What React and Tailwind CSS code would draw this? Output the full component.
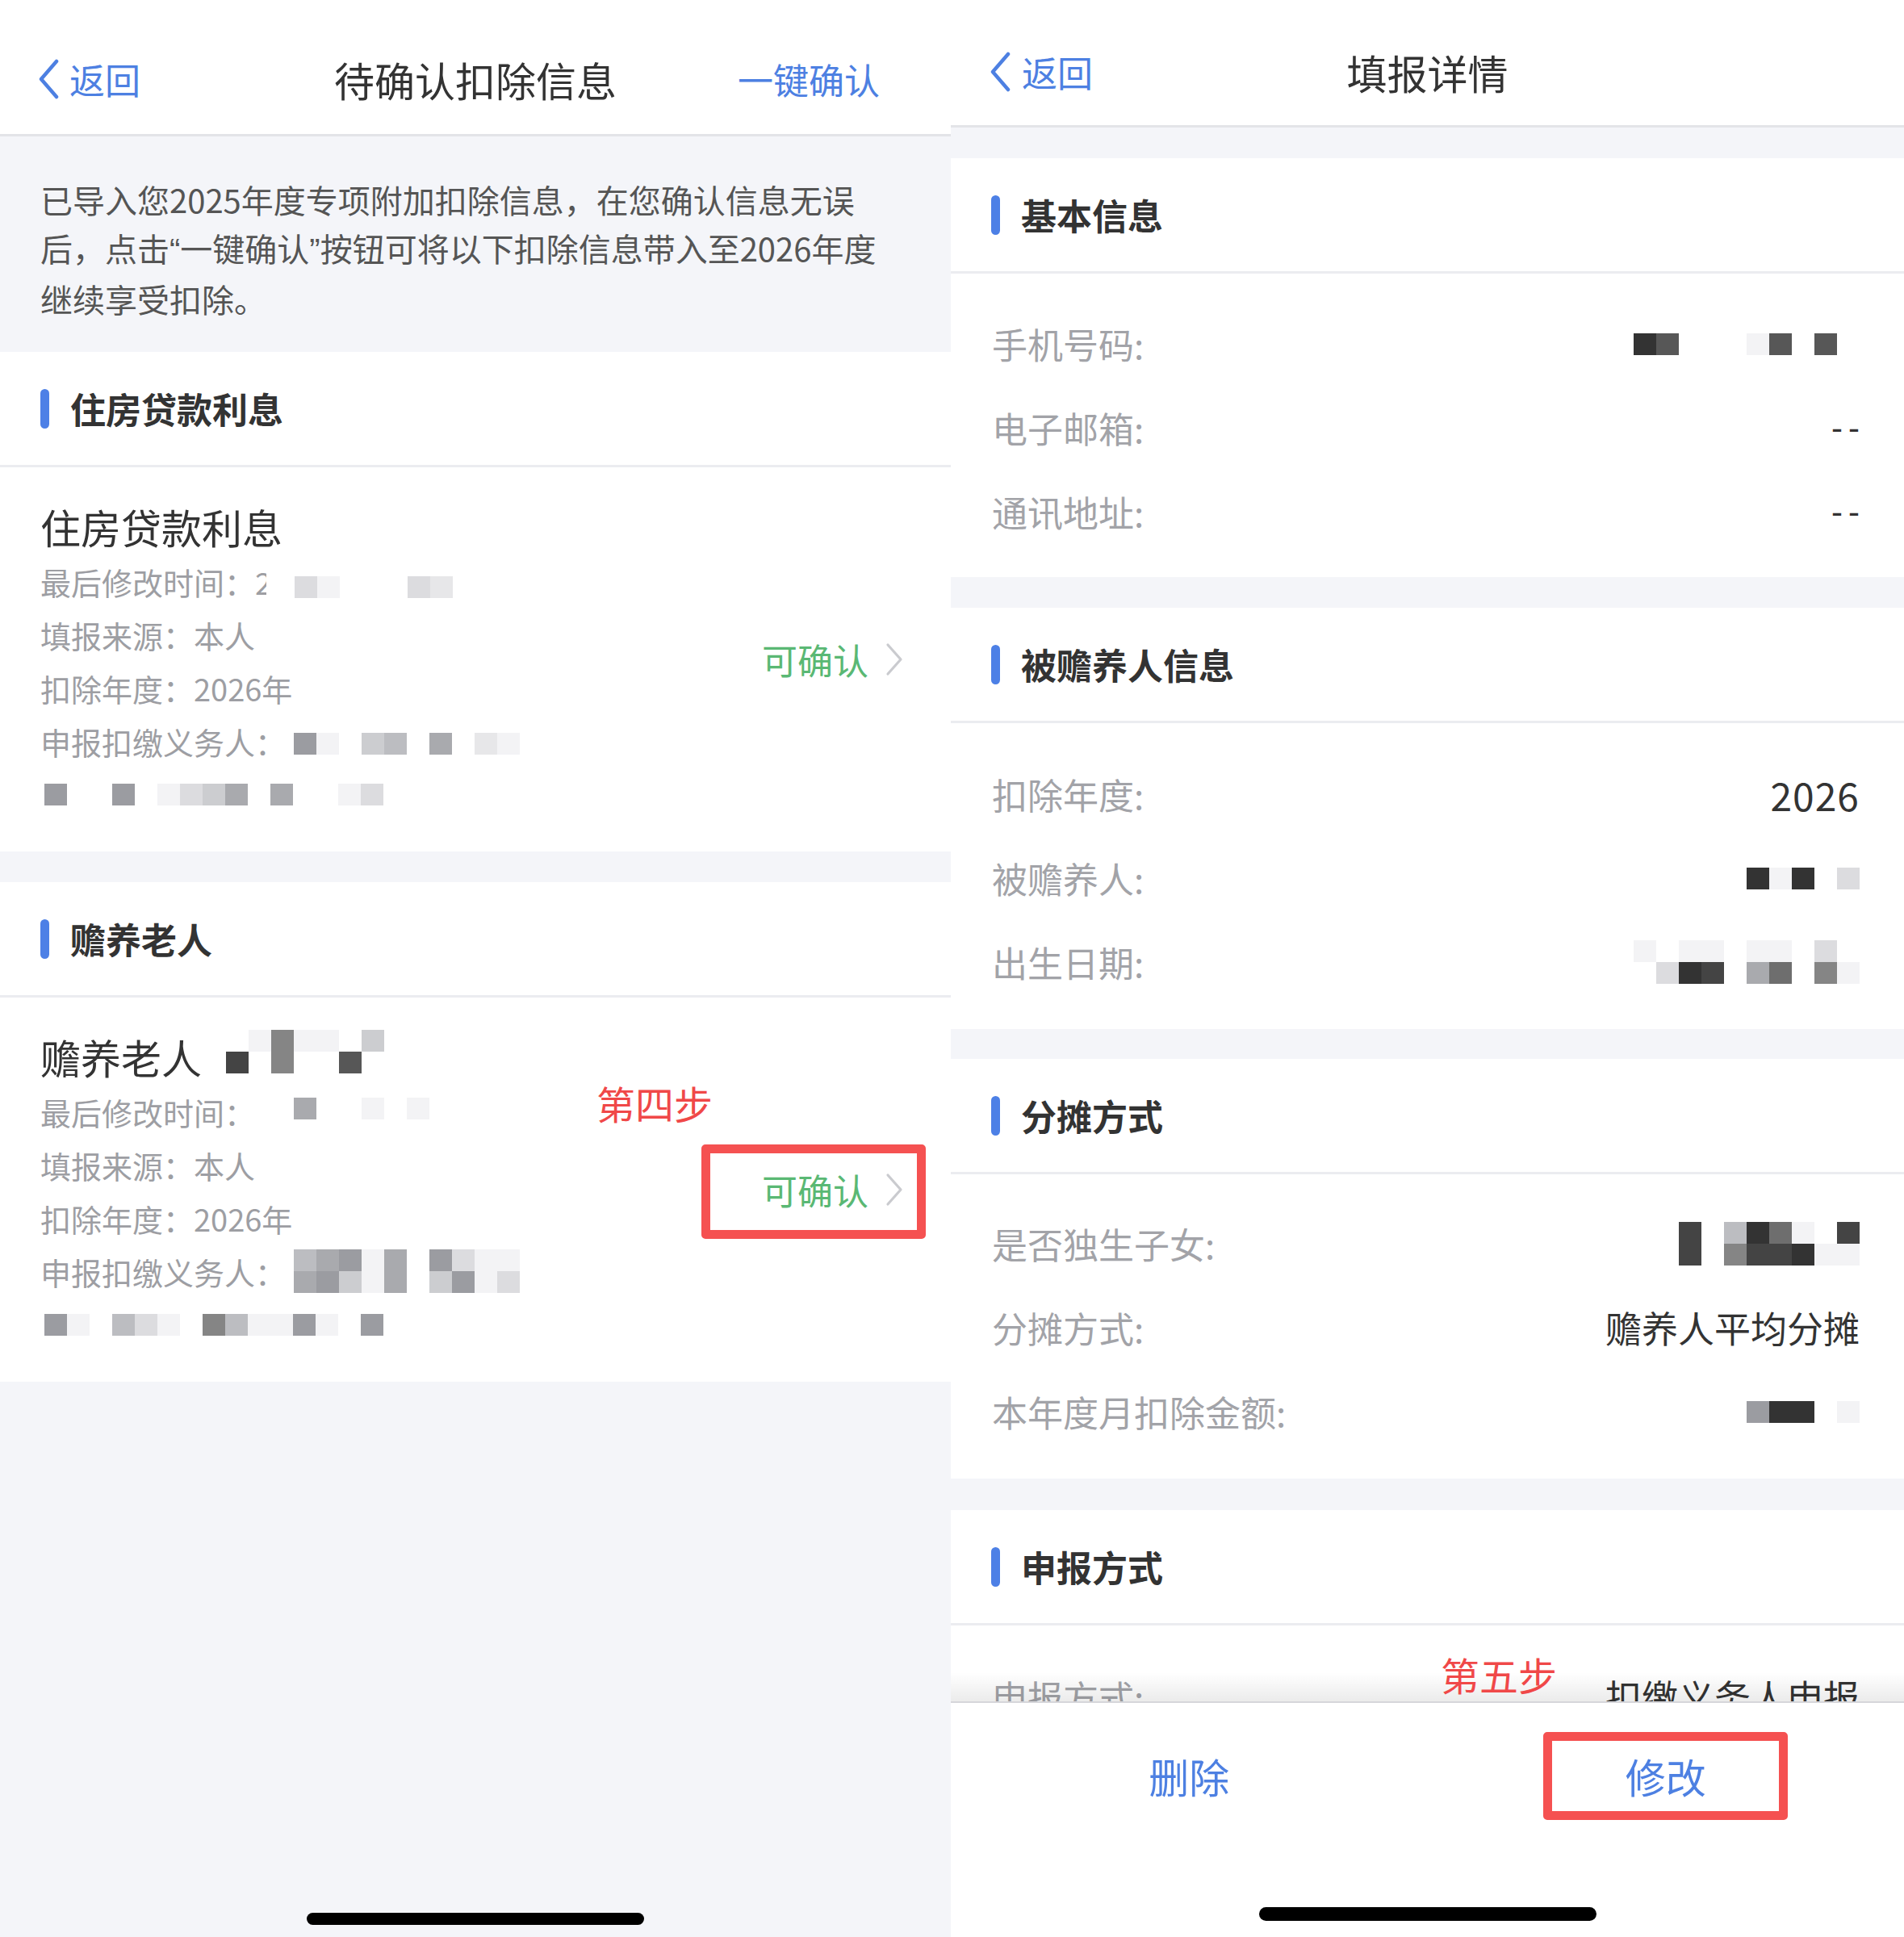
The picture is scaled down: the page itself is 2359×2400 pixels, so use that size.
import React from "react";

// pixelated (redacted) cells
const SHADE = {
  0: "bg-[#333333]",
  1: "bg-[#444444]",
  2: "bg-[#575757]",
  3: "bg-[#6e6e6e]",
  4: "bg-[#858585]",
  5: "bg-[#9b9ca1]",
  6: "bg-[#a9aaae]",
  7: "bg-[#bcbdc1]",
  8: "bg-[#cccdd0]",
  9: "bg-[#dcdcdf]",
  a: "bg-[#e7e7e9]",
  b: "bg-[#f3f3f5]",
};

const Blocks = ({ rows, className = "" }) => (
  <div className={`inline-flex flex-col ${className}`}>
    {rows.map((row, i) => (
      <div key={i} className="flex">
        {row.split("").map((c, j) => (
          <span key={j} className={`w-[28px] h-[27px] ${SHADE[c] || ""}`} />
        ))}
      </div>
    ))}
  </div>
);

const BackChevron = () => (
  <svg width="28" height="50" viewBox="0 0 28 50" fill="none">
    <path
      d="M24 3 L5 25 L24 47"
      stroke="#4d80e2"
      strokeWidth="4.5"
      strokeLinecap="round"
      strokeLinejoin="round"
    />
  </svg>
);

const RightChevron = () => (
  <svg width="24" height="42" viewBox="0 0 24 42" fill="none">
    <path
      d="M4 3 L20 21 L4 39"
      stroke="#cacbcf"
      strokeWidth="3.2"
      strokeLinecap="round"
      strokeLinejoin="round"
    />
  </svg>
);

const SectionHeader = ({ title }) => (
  <div className="h-[143px] shrink-0 bg-white border-b-[3px] border-[#ebecf0] flex items-center pl-[50px]">
    <span className="w-[11px] h-[49px] rounded-full bg-[#4d80e6]" />
    <span className="ml-[26px] text-[44px] font-bold text-[#333]">{title}</span>
  </div>
);

const Confirm = () => (
  <div className="flex items-center">
    <span className="text-[44px] text-[#5ab874] leading-none">可确认</span>
    <span className="ml-[20px] flex">
      <RightChevron />
    </span>
  </div>
);

const Line = ({ children }) => (
  <div className="flex items-center h-[66px] text-[38px] text-[#9d9ea3]">{children}</div>
);

const Q = ({ children }) => (
  <span className="font-['Liberation_Sans',sans-serif]">{children}</span>
);

const LeftPanel = () => (
  <div className="w-[1178px] h-full shrink-0 flex flex-col bg-[#f4f5f9]">
    {/* nav */}
    <div className="h-[169px] shrink-0 bg-white border-b-[3px] border-[#e3e4e8] grid grid-cols-[1fr_auto_1fr] items-center pt-[30px] px-[46px]">
      <div className="flex items-center text-[#4d80e2] text-[44px] leading-none">
        <BackChevron />
        <span className="ml-[12px]">返回</span>
      </div>
      <div className="text-[50px] text-[#333] leading-none">待确认扣除信息</div>
      <div className="justify-self-end pr-[42px] text-[#4d80e2] text-[44px] leading-none">
        一键确认
      </div>
    </div>

    {/* notice */}
    <div className="shrink-0 pt-[48px] pb-[36px] px-[50px] text-[40px] leading-[60px] text-[#555] whitespace-nowrap">
      已导入您2025年度专项附加扣除信息，在您确认信息无误
      <br />
      后，点击<Q>“</Q>一键确认<Q>”</Q>按钮可将以下扣除信息带入至2026年度
      <br />
      继续享受扣除。
    </div>

    <SectionHeader title="住房贷款利息" />
    <div className="h-[476px] shrink-0 bg-white flex items-center justify-between pl-[50px] pr-[58px]">
      <div className="flex flex-col">
        <div className="h-[70px] flex items-center text-[50px] text-[#333]">住房贷款利息</div>
        <Line>
          <span>最后修改时间：</span>
          <span className="w-[14px] overflow-hidden">2</span>
          <Blocks rows={[".9b...9a"]} className="ml-[7px] mt-[14px]" />
        </Line>
        <Line>填报来源：本人</Line>
        <Line>扣除年度：2026年</Line>
        <Line>
          <span>申报扣缴义务人：</span>
          <Blocks rows={["5b.87.6.ab"]} className="ml-[10px] mt-[6px]" />
        </Line>
        <Line>
          <Blocks rows={["5..5.b986.6..b9"]} className="ml-[5px]" />
        </Line>
      </div>
      <Confirm />
    </div>

    <div className="h-[38px] shrink-0" />

    <SectionHeader title="赡养老人" />
    <div className="relative h-[476px] shrink-0 bg-white flex items-center justify-between pl-[50px] pr-[58px]">
      <div className="flex flex-col">
        <div className="h-[70px] flex items-center text-[50px] text-[#333]">
          <span>赡养老人</span>
          <Blocks rows={[".b4bb.8", "1.4..2."]} className="ml-[30px] mt-[-12px]" />
        </div>
        <Line>
          <span>最后修改时间：</span>
          <Blocks rows={["6..b.b"]} className="ml-[48px] mt-[-8px]" />
        </Line>
        <Line>填报来源：本人</Line>
        <Line>扣除年度：2026年</Line>
        <Line>
          <span>申报扣缴义务人：</span>
          <Blocks rows={["765b6.59bb", "658b6.85b9"]} className="ml-[10px]" />
        </Line>
        <Line>
          <Blocks rows={["5b.79b.47bb5b.5"]} className="ml-[5px]" />
        </Line>
      </div>
      <Confirm />

      <span className="absolute left-[739px] top-[100px] text-[48px] leading-[60px] text-[#f04848]">
        第四步
      </span>
      <span className="absolute left-[869px] top-[182px] w-[278px] h-[117px] border-[11px] border-[#f55151] rounded-[5px]" />
    </div>

    <div className="flex-1 flex items-end justify-center pb-[15px]">
      <span className="w-[418px] h-[15px] rounded-full bg-black" />
    </div>
  </div>
);

const Row = ({ label, children }) => (
  <div className="h-[104px] flex items-center justify-between pl-[51px] pr-[55px]">
    <span className="text-[44px] text-[#a2a3a8]">{label}</span>
    <div className="flex items-center text-[45px] text-[#333]">{children}</div>
  </div>
);

const Dash = () => (
  <span className="tracking-[7px] mr-[-7px] font-['Liberation_Sans',sans-serif] text-[42px]">--</span>
);

const RightPanel = () => (
  <div className="relative w-[1181px] h-full shrink-0 flex flex-col bg-[#f4f5f9]">
    {/* nav */}
    <div className="h-[158px] shrink-0 bg-white border-b-[3px] border-[#e3e4e8] grid grid-cols-[1fr_auto_1fr] items-center pt-[23px] px-[47px]">
      <div className="flex items-center text-[#4d80e2] text-[44px] leading-none">
        <BackChevron />
        <span className="ml-[13px]">返回</span>
      </div>
      <div className="text-[50px] text-[#333] leading-none">填报详情</div>
      <div />
    </div>

    <div className="relative flex-1 overflow-hidden flex flex-col">
      <div className="h-[38px] shrink-0" />
      <SectionHeader title="基本信息" />
      <div className="shrink-0 bg-white pt-[35px] pb-[29px]">
        <Row label="手机号码:">
          <Blocks rows={["02...b2.2."]} />
        </Row>
        <Row label="电子邮箱:">
          <Dash />
        </Row>
        <Row label="通讯地址:">
          <Dash />
        </Row>
      </div>

      <div className="h-[38px] shrink-0" />
      <SectionHeader title="被赡养人信息" />
      <div className="shrink-0 bg-white pt-[36px] pb-[31px]">
        <Row label="扣除年度:">
          <span className="text-[48px] tracking-[1px]">2026</span>
        </Row>
        <Row label="被赡养人:">
          <Blocks rows={["0b0.9"]} />
        </Row>
        <Row label="出生日期:">
          <Blocks rows={["b.bb.bb.9.", ".901.63.4b"]} />
        </Row>
      </div>

      <div className="h-[37px] shrink-0" />
      <SectionHeader title="分摊方式" />
      <div className="shrink-0 bg-white pt-[34px] pb-[31px]">
        <Row label="是否独生子女:">
          <Blocks rows={["1.703b.1", "1.4110bb"]} />
        </Row>
        <Row label="分摊方式:">赡养人平均分摊</Row>
        <Row label="本年度月扣除金额:">
          <Blocks rows={["500.b"]} />
        </Row>
      </div>

      <div className="h-[39px] shrink-0" />
      <SectionHeader title="申报方式" />
      <div className="shrink-0 bg-white pt-[36px] pb-[31px]">
        <Row label="申报方式:">扣缴义务人申报</Row>
      </div>

      <span className="absolute bottom-0 left-0 right-0 h-[36px] bg-linear-to-b from-transparent to-[#00000014]" />
    </div>

    {/* bottom action bar */}
    <div className="relative z-10 h-[292px] shrink-0 bg-white border-t-[2px] border-[#d6d6da] flex flex-col">
      <div className="grid grid-cols-2 pt-[36px]">
        <div className="flex justify-center">
          <div className="w-[303px] h-[109px] flex items-center justify-center text-[50px] text-[#4d80e2]">
            删除
          </div>
        </div>
        <div className="flex justify-center">
          <div className="w-[303px] h-[109px] flex items-center justify-center text-[50px] text-[#4d80e2] border-[11px] border-[#f55151] rounded-[5px]">
            修改
          </div>
        </div>
      </div>
      <div className="flex-1 flex items-end justify-center pb-[20px]">
        <span className="w-[418px] h-[17px] rounded-full bg-black" />
      </div>
    </div>

    <span className="absolute z-20 left-[607px] top-[2044px] text-[48px] leading-[60px] text-[#f04848]">
      第五步
    </span>
  </div>
);

const App = () => {
  return (
    <div className="flex w-[2359px] h-[2400px] overflow-hidden bg-white font-['Noto_Sans_CJK_SC','Noto_Sans',sans-serif]">
      <LeftPanel />
      <RightPanel />
    </div>
  );
};

export default App;
